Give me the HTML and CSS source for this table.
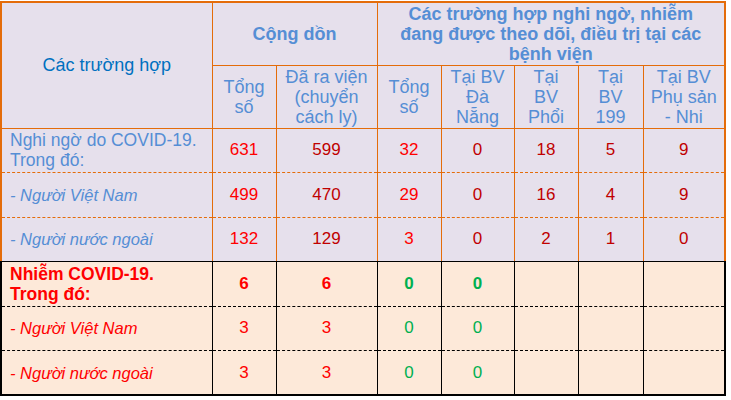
FILE: index.html
```html
<!DOCTYPE html>
<html lang="vi">
<head>
<meta charset="utf-8">
<link rel="stylesheet" href="styles.css">
</head>
<body>
<table class="stats">
  <colgroup>
    <col class="c-label">
    <col class="c-n1">
    <col class="c-n2">
    <col class="c-n3">
    <col class="c-n4">
    <col class="c-n5">
    <col class="c-n6">
    <col class="c-n7">
  </colgroup>
  <thead>
    <tr class="h1">
      <th rowspan="2" class="title">Các trường hợp</th>
      <th colspan="2" class="group">Cộng dồn</th>
      <th colspan="5" class="group">Các trường hợp nghi ngờ, nhiễm<br>đang được theo dõi, điều trị tại các<br>bệnh viện</th>
    </tr>
    <tr class="h2">
      <th class="sub">Tổng<br>số</th>
      <th class="sub">Đã ra viện<br>(chuyển<br>cách ly)</th>
      <th class="sub">Tổng<br>số</th>
      <th class="sub">Tại BV<br>Đà<br>Nẵng</th>
      <th class="sub">Tại<br>BV<br>Phổi</th>
      <th class="sub">Tại<br>BV<br>199</th>
      <th class="sub">Tại BV<br>Phụ sản<br>- Nhi</th>
    </tr>
  </thead>
  <tbody class="suspect">
    <tr class="r-a">
      <td class="label">Nghi ngờ do COVID-19.<br>Trong đó:</td>
      <td class="red">631</td>
      <td class="dark">599</td>
      <td class="red">32</td>
      <td class="dark">0</td>
      <td class="dark">18</td>
      <td class="dark">5</td>
      <td class="dark">9</td>
    </tr>
    <tr class="r-b">
      <td class="label sub-label">- Người Việt Nam</td>
      <td class="red">499</td>
      <td class="dark">470</td>
      <td class="red">29</td>
      <td class="dark">0</td>
      <td class="dark">16</td>
      <td class="dark">4</td>
      <td class="dark">9</td>
    </tr>
    <tr class="r-a last">
      <td class="label sub-label">- Người nước ngoài</td>
      <td class="red">132</td>
      <td class="dark">129</td>
      <td class="red">3</td>
      <td class="dark">0</td>
      <td class="dark">2</td>
      <td class="dark">1</td>
      <td class="dark">0</td>
    </tr>
  </tbody>
  <tbody class="infected">
    <tr class="r-b first">
      <td class="label strong">Nhiễm COVID-19.<br>Trong đó:</td>
      <td class="red strong">6</td>
      <td class="red strong">6</td>
      <td class="green strong">0</td>
      <td class="green strong">0</td>
      <td></td>
      <td></td>
      <td></td>
    </tr>
    <tr class="r-a">
      <td class="label sub-label">- Người Việt Nam</td>
      <td class="red">3</td>
      <td class="red">3</td>
      <td class="green">0</td>
      <td class="green">0</td>
      <td></td>
      <td></td>
      <td></td>
    </tr>
    <tr class="r-b">
      <td class="label sub-label">- Người nước ngoài</td>
      <td class="red">3</td>
      <td class="red">3</td>
      <td class="green">0</td>
      <td class="green">0</td>
      <td></td>
      <td></td>
      <td></td>
    </tr>
  </tbody>
</table>
</body>
</html>
```

FILE: styles.css
```css
html, body {
  margin: 0;
  padding: 0;
  background: #ffffff;
}

body {
  padding-top: 1px;
  font-family: "Liberation Sans", Arial, sans-serif;
}

.stats {
  border-collapse: collapse;
  table-layout: fixed;
  width: 726px;
  border: 2px solid #e46c0a;
}

.c-label { width: 211px; }
.c-n1 { width: 64px; }
.c-n2 { width: 101px; }
.c-n3 { width: 64px; }
.c-n4 { width: 73px; }
.c-n5 { width: 64px; }
.c-n6 { width: 65px; }
.c-n7 { width: 82px; }

th, td {
  padding: 0 2px;
  text-align: center;
  vertical-align: middle;
  line-height: 20px;
}

thead th {
  background: #e6e0ec;
  border: 1px solid #e46c0a;
  color: #558ed5;
  font-size: 18px;
  font-weight: normal;
}

thead .group {
  font-weight: bold;
}

thead .title {
  color: #0070c0;
  font-size: 18px;
}

.h1 { height: 63px; }
.h2 { height: 63px; }

tbody tr { height: 44.5px; }

.suspect td {
  background: #e6e0ec;
  border-left: 1px solid #e46c0a;
  border-right: 1px solid #e46c0a;
  border-bottom: 1px dashed #e46c0a;
}

.suspect tr.last td {
  border-bottom: 1px solid #000000;
}

.infected td {
  background: #fde9d9;
  border-left: 1px solid #000000;
  border-right: 1px solid #000000;
  border-bottom: 1px dashed #000000;
}

.infected tr:first-child td {
  border-top: 1px solid #000000;
}

.infected tr:last-child td {
  border-bottom: 2px solid #000000;
}

.infected td:first-child {
  border-left: 2px solid #000000;
}

.infected td:last-child {
  border-right: 2px solid #000000;
}

td {
  font-size: 17px;
}

td.label {
  text-align: left;
  padding-left: 8px;
  font-size: 17.5px;
  color: #558ed5;
}

td.sub-label {
  font-style: italic;
  font-size: 16.5px;
}

.infected td.label {
  color: #ff0000;
}

td.strong {
  font-weight: bold;
}

.red { color: #ff0000; }
.dark { color: #c00000; }
.green { color: #00b050; }
```
